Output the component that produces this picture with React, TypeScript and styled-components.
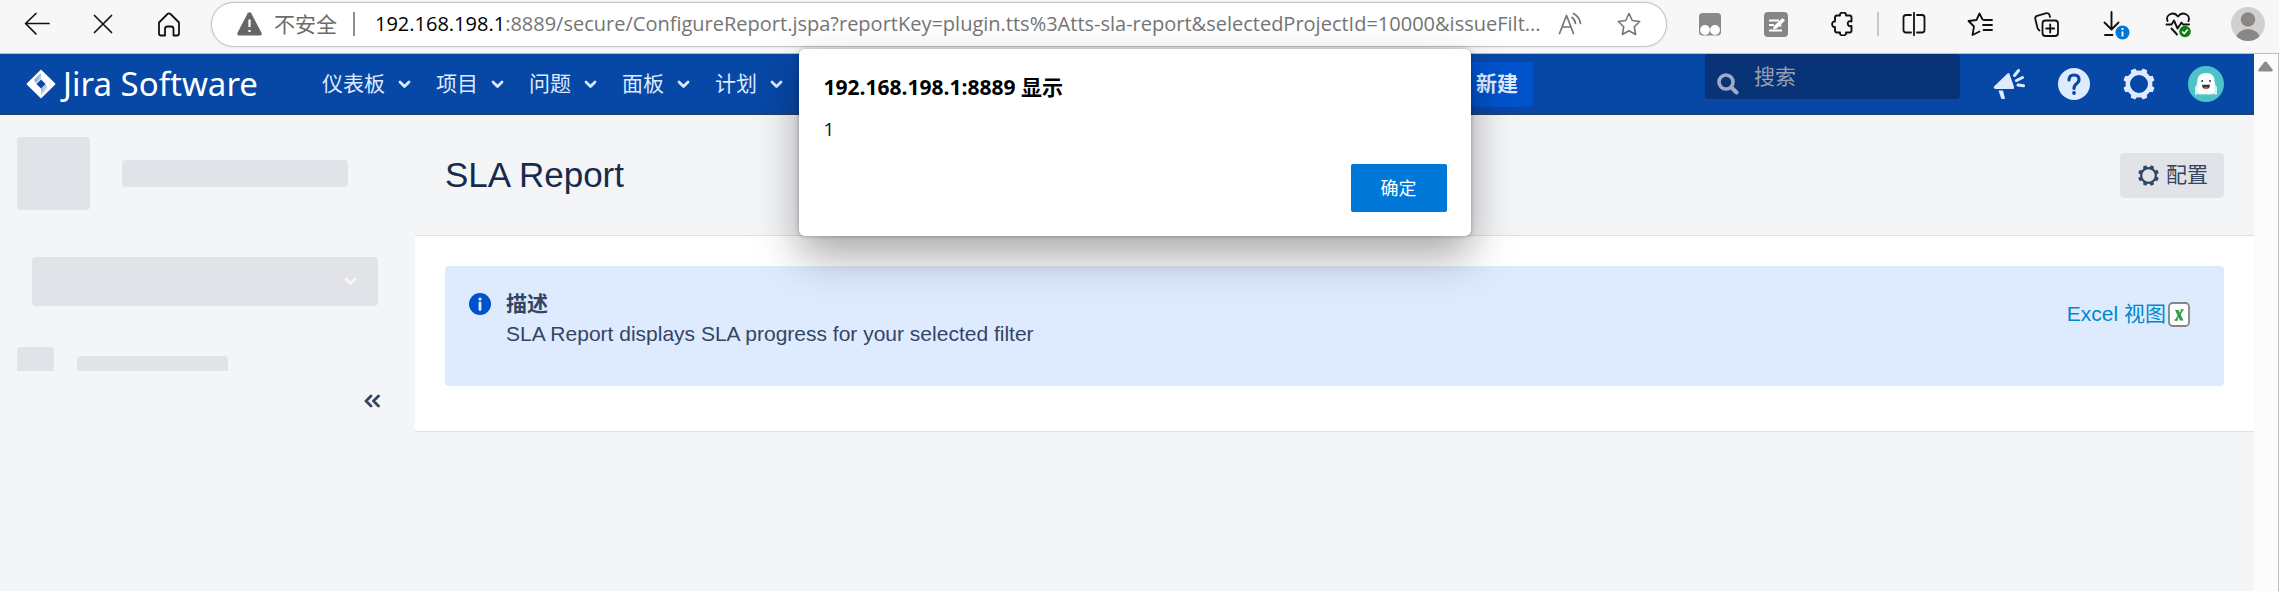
import React from 'react';
import styled, { createGlobalStyle } from 'styled-components';

const ui = `'Open Sans', 'Noto Sans CJK SC', sans-serif`;
const jira = `'Liberation Sans', 'Noto Sans CJK SC', sans-serif`;

const GlobalStyle = createGlobalStyle`
  *, *::before, *::after { box-sizing: border-box; }
  body { margin: 0; background: #f4f5f7; font-family: ${jira}; color: #344563; font-size: 21px; line-height: 30px; }
  button, input { font: inherit; color: inherit; border: 0; margin: 0; }
  button { background: none; padding: 0; cursor: pointer; }
  svg { display: block; flex: none; }
`;

const Window = styled.div`
  position: relative;
  display: flex;
  flex-direction: column;
  min-height: 100vh;
`;

/* Browser chrome */
const Toolbar = styled.div`
  display: flex;
  align-items: center;
  height: 54px;
  padding: 0 2px 5px 4px;
  background: #f7f7f7;
  border-bottom: 1px solid #bdbdbd;
  color: #111;
`;
const ToolButton = styled.button`
  display: flex;
  flex: none;
  align-items: center;
  justify-content: center;
  width: 66px;
  height: 48px;
`;
const ProfileButton = styled(ToolButton)`
  justify-content: flex-end;
  padding-right: 12px;
`;
const AddressBar = styled.div`
  display: flex;
  flex: 1;
  min-width: 0;
  align-items: center;
  height: 45px;
  margin: 0 10px 0 9px;
  padding: 0 24px 0 25px;
  background: #fff;
  border: 1px solid #c4c4c4;
  border-radius: 23px;
  box-shadow: 0 0 2px #d0d0d0;
  font-family: ${ui};
  color: #6b6b6b;
`;
const Security = styled.button`
  display: flex;
  flex: none;
  align-items: center;
  gap: 12px;
  margin-right: 16px;
`;
const Divider = styled.span<{ $tone: string }>`
  flex: none;
  width: 2px;
  height: 24px;
  background: ${(p) => p.$tone};
`;
const Url = styled.div`
  flex: 1;
  min-width: 0;
  margin-left: 20px;
  overflow: hidden;
  white-space: nowrap;
  font-size: 20px;
  color: #757575;
`;
const Host = styled.span`
  color: #000;
`;
const AddressActions = styled.div`
  display: flex;
  flex: none;
  gap: 34px;
  color: #757575;
`;
const ToolDivider = styled(Divider)`
  margin: 0 2px;
`;

/* Page viewport */
const Viewport = styled.div`
  display: flex;
  flex: 1;
`;
const Page = styled.div`
  display: flex;
  flex: 1;
  flex-direction: column;
  min-width: 0;
`;
const Scrollbar = styled.div`
  width: 25px;
  padding: 7px 0 0 4px;
  background: #fcfcfc;
  border-right: 1px solid #bdbdbd;
`;

/* Jira header */
const Header = styled.header`
  display: flex;
  align-items: center;
  height: 61px;
  padding: 0 30px 0 26px;
  background: #0747a6;
  border-bottom: 1px solid #2a3f63;
  color: #deebff;
`;
const Logo = styled.a`
  display: flex;
  align-items: center;
  gap: 7px;
  width: 296px;
  color: #fff;
  font-family: 'Noto Sans', sans-serif;
  font-size: 33px;
  white-space: nowrap;
  text-decoration: none;
`;
const Menu = styled.nav`
  display: flex;
  gap: 25px;
`;
const MenuItem = styled.button`
  display: flex;
  align-items: center;
  gap: 13px;
  white-space: nowrap;
`;
const HeaderTools = styled.div`
  display: flex;
  align-items: center;
  height: 100%;
  margin-left: auto;
`;
const Create = styled.button`
  height: 45px;
  margin-right: 172px;
  padding: 0 15px;
  background: #0052cc;
  border-radius: 4px;
  font-weight: 700;
`;
const Search = styled.label`
  display: flex;
  align-self: flex-start;
  width: 255px;
  height: 45px;
  padding: 0 12px;
  gap: 15px;
  background: #083376;
  border-radius: 4px;
  color: #a0abc2;

  svg { margin-top: 19px; }
`;
const SearchInput = styled.input`
  flex: 1;
  min-width: 0;
  padding: 0;
  background: transparent;
  outline: 0;
  &::placeholder { color: #97a0af; opacity: 1; }
`;
const HeaderIcons = styled.div`
  display: flex;
  align-items: center;
  gap: 33px;
  margin-left: 33px;
`;

/* Body */
const Body = styled.div`
  display: flex;
`;
const Sidebar = styled.aside`
  flex: none;
  width: 415px;
  padding: 22px 35px 0 17px;
`;
const SkeletonRow = styled.div<{ $gap: number; $height: number; $align: string }>`
  display: flex;
  align-items: ${(p) => p.$align};
  gap: ${(p) => p.$gap}px;
  height: ${(p) => p.$height}px;
  overflow: hidden;
`;
const Skeleton = styled.div<{ $width: number; $height: number; $cut?: boolean }>`
  width: ${(p) => p.$width}px;
  height: ${(p) => p.$height}px;
  background: #e2e3e8;
  border-radius: ${(p) => (p.$cut ? '4px 4px 0 0' : '4px')};
`;
const SkeletonSelect = styled.button`
  display: flex;
  align-items: center;
  justify-content: flex-end;
  width: 346px;
  height: 49px;
  margin: 47px 0 41px 15px;
  padding-right: 21px;
  background: #e2e3e8;
  border-radius: 4px;
  color: #f7f8f9;
`;
const Collapse = styled.button`
  display: block;
  margin: 23px 0 0 auto;
`;
const Main = styled.main`
  flex: 1;
  min-width: 0;
`;
const PageHeader = styled.div`
  display: flex;
  align-items: center;
  justify-content: space-between;
  height: 120px;
  padding: 0 30px;
`;
const Title = styled.h1`
  margin: 0;
  color: #172b4d;
  font-size: 35px;
  font-weight: 400;
  line-height: 42px;
`;
const Configure = styled.button`
  display: flex;
  align-items: center;
  gap: 7px;
  height: 45px;
  padding: 0 16px 0 18px;
  background: #e2e3e8;
  border-radius: 4px;
`;
const Panel = styled.section`
  padding: 30px 30px 45px;
  background: #fff;
  border: solid #dcdfe4;
  border-width: 1px 0;
`;
const Message = styled.div`
  display: flex;
  align-items: flex-start;
  min-height: 120px;
  padding: 23px 34px 0 24px;
  gap: 15px;
  background: #deebff;
  border-radius: 4px;

  > svg { margin-top: 4px; }
`;
const MessageText = styled.div`
  flex: 1;
`;
const MessageTitle = styled.strong`
  display: block;
`;
const ExcelLink = styled.a`
  display: flex;
  align-items: center;
  gap: 2px;
  margin-top: 10px;
  color: #0088cc;
  text-decoration: none;
`;

/* Script alert */
const AlertLayer = styled.div`
  position: absolute;
  top: 49px;
  left: 0;
  right: 10px;
  display: flex;
  justify-content: center;
`;
const Alert = styled.div`
  width: 672px;
  padding: 23px 24px 24px 25px;
  background: #fff;
  border-radius: 6px;
  box-shadow: 0 0 4px rgba(0, 0, 0, 0.3), 0 20px 44px rgba(0, 0, 0, 0.34);
  font-family: ${ui};
  font-size: 19px;
  color: #111;
`;
const AlertTitle = styled.h2`
  margin: 0 0 12px;
  font-size: 21px;
  font-weight: 700;
  line-height: 30px;
  color: #000;
`;
const AlertText = styled.p`
  margin: 0 0 20px;
`;
const AlertButton = styled.button`
  display: block;
  width: 96px;
  height: 48px;
  margin-left: auto;
  background: #0078d7;
  border-radius: 2px;
  color: #fff;
  font-size: 18px;
`;

const line = { fill: 'none', stroke: 'currentColor', strokeLinecap: 'round', strokeLinejoin: 'round' } as const;

const Chevron = () => (
  <svg width="13" height="9" viewBox="0 0 13 9" {...line} strokeWidth="2.8"><path d="M2 2l4.5 4.5L11 2" /></svg>
);
const Gear = ({ size, ring }: { size: number; ring: number }) => (
  <svg width={size} height={size} viewBox="0 0 32 32">
    <circle cx="16" cy="16" r="11.200" fill="none" stroke="currentColor" strokeWidth={ring} />
    {[22.5, 67.5, 112.5, 157.5, 202.5, 247.5, 292.5, 337.5].map((a) => (
      <path key={a} d="M12.600 4.500L13.600.2h4.800l1 4.300z" fill="currentColor" transform={`rotate(${a} 16 16)`} />
    ))}
  </svg>
);

export default function App() {
  return (
    <Window>
      <GlobalStyle />
      <Toolbar>
        <ToolButton aria-label="Back">
          <svg width="26" height="24" viewBox="0 0 26 24" {...line} strokeWidth="1.700"><path d="M25 11.500H2M12 1.500L1.500 11.500 12 22" /></svg>
        </ToolButton>
        <ToolButton aria-label="Stop">
          <svg width="20" height="20" viewBox="0 0 20 20" {...line} strokeWidth="1.700"><path d="M1.500 1.500l17 17M18.500 1.500l-17 17" /></svg>
        </ToolButton>
        <ToolButton aria-label="Home">
          <svg width="24" height="25" viewBox="0 0 24 25" {...line} strokeWidth="1.800">
            <path d="M2 10.500L10.500 2q1.500-1.200 3 0l8.500 8.500v11q0 2-2 2h-3.500v-6.500q0-2.500-2.500-2.500h-3.500q-2.500 0-2.500 2.500v6.500H4q-2 0-2-2z" />
          </svg>
        </ToolButton>
        <AddressBar>
          <Security>
            <svg width="25" height="24" viewBox="0 0 25 24">
              <path d="M10.700 1.200q1.800-2 3.600 0L24.600 21q.6 2.500-1.800 2.500H2.200Q-.2 23.500.4 21z" fill="#666" />
              <path d="M12.500 7.500v7.500M12.500 18v2" stroke="#fff" strokeWidth="2.200" />
            </svg>
            不安全
          </Security>
          <Divider $tone="#8e8e8e" />
          <Url>
            <Host>192.168.198.1</Host>:8889/secure/ConfigureReport.jspa?reportKey=plugin.tts%3Atts-sla-report&amp;selectedProjectId=10000&amp;issueFilt...
          </Url>
          <AddressActions>
            <button aria-label="Read aloud">
              <svg width="24" height="24" viewBox="0 0 24 24" {...line} strokeWidth="1.700">
                <path d="M1.500 21.500L8.500 3.500l7 18M4 15h9M14 5.500q3 2 3.500 6M15.500 1.500q6 3.500 7 10" />
              </svg>
            </button>
            <button aria-label="Favourite">
              <svg width="26" height="24" viewBox="0 0 24 24" {...line} strokeWidth="1.600">
                <path d="M12 1.500l3.300 7 7.400 1-5.400 5.300 1.300 7.700L12 18.800l-6.600 3.700 1.300-7.700L1.300 9.500l7.400-1z" />
              </svg>
            </button>
          </AddressActions>
        </AddressBar>
        <ToolButton aria-label="Tampermonkey">
          <svg width="22" height="23" viewBox="0 0 22 23">
            <rect width="22" height="22.500" rx="3.500" fill="#8a8a8a" />
            <circle cx="6" cy="17" r="4.900" fill="#fff" /><circle cx="16" cy="17" r="4.900" fill="#fff" />
          </svg>
        </ToolButton>
        <ToolButton aria-label="Notes">
          <svg width="24" height="25" viewBox="0 0 24 25">
            <rect width="24" height="25" rx="4" fill="#868686" />
            <path d="M5 8.500h10M5 13h5M5 18.500h13M14.500 13.500h3" stroke="#fff" strokeWidth="2.200" />
            <path d="M9 17.500l1-3.500 8.500-8 2.500 2.500-8.500 8z" fill="#fff" />
          </svg>
        </ToolButton>
        <ToolButton aria-label="Extensions">
          <svg width="22" height="24" viewBox="0 0 22 24" {...line} strokeWidth="1.900">
            <path d="M6 3.500H9C8-.5 16-.5 15 3.500h3.500q2 0 2 2v4C15.500 7.500 15.500 15.500 20.500 14v4.500q0 2-2 2H15C16 24.300 8 24.300 9 20.500H6q-2 0-2-2V15C.2 16 .2 8.500 4 9.500v-4q0-2 2-2z" />
          </svg>
        </ToolButton>
        <ToolDivider $tone="#c8c8c8" />
        <ToolButton aria-label="Split screen">
          <svg width="24" height="24" viewBox="0 0 24 24" {...line} strokeWidth="1.800">
            <path d="M9 3H4Q1.500 3 1.500 5.500v12.500q0 2.500 2.500 2.500h5M15 3h5q2.500 0 2.500 2.500v12.500q0 2.500-2.500 2.500h-5M12 .8v22.400" />
          </svg>
        </ToolButton>
        <ToolButton aria-label="Favourites">
          <svg width="26" height="24" viewBox="0 0 26 24" {...line} strokeWidth="1.800">
            <path d="M17.500 8l-2-.5L12.500 1.500 9.500 8 1.500 9l5.500 5.500L5.500 23l7-3.500M17 8h8M16 13h9M16.500 18h8.500" />
          </svg>
        </ToolButton>
        <ToolButton aria-label="Collections">
          <svg width="25" height="25" viewBox="0 0 25 25" {...line} strokeWidth="1.800">
            <rect x="8.500" y="8.500" width="15.500" height="15.500" rx="3" />
            <path d="M16.200 12.500v8M12.200 16.500h8M5.500 18.500Q4 17.500 3.500 16L1.200 6.500Q1 4.500 3 3.800L12.500 1.200q2.200-.2 3 1.800l.5 2" />
          </svg>
        </ToolButton>
        <ToolButton aria-label="Downloads">
          <svg width="38" height="32" viewBox="-8 -2 38 32">
            <path d="M10.500 2v17M3.500 12.500l7 7 7-7M4 25h7.500" {...line} strokeWidth="1.900" />
            <circle cx="21.500" cy="22.500" r="7" fill="#0078d7" />
            <path d="M21.500 21.500v5M21.500 18v2" stroke="#fff" strokeWidth="1.800" />
          </svg>
        </ToolButton>
        <ToolButton aria-label="Browser essentials">
          <svg width="26" height="28" viewBox="0 -2 26 28">
            <path d="M2.500 9C0 3 8.500-1.500 13 4.500 17.500-1.500 26 3 23.500 9M1.500 12.500h5l2.500-4 3.500 8 4-6 1.500 2h6M6.500 16.500l5.500 6" {...line} strokeWidth="1.900" />
            <circle cx="20" cy="19.500" r="5.800" fill="#0f7b10" />
            <path d="M17.200 19.500l2 2 3.600-4" fill="none" stroke="#fff" strokeWidth="1.600" />
          </svg>
        </ToolButton>
        <ProfileButton aria-label="Profile">
          <svg width="34" height="34" viewBox="0 0 34 34">
            <clipPath id="profile"><circle cx="17" cy="17" r="17" /></clipPath>
            <g clipPath="url(#profile)">
              <rect width="34" height="34" fill="#d2d0ce" />
              <circle cx="17" cy="12.500" r="7.200" fill="#8a8886" />
              <ellipse cx="17" cy="32" rx="12" ry="10" fill="#8a8886" />
            </g>
          </svg>
        </ProfileButton>
      </Toolbar>

      <Viewport>
        <Page>
          <Header>
            <Logo href="#">
              <svg width="30" height="30" viewBox="0 0 30 30">
                <defs>
                  <linearGradient id="fade" x1="0" y1="0" x2="1" y2="1">
                    <stop offset="0.200" stopColor="#5f8bcb" /><stop offset="1" stopColor="#fff" />
                  </linearGradient>
                  <linearGradient id="fade-back" x1="1" y1="1" x2="0" y2="0">
                    <stop offset="0.200" stopColor="#fff" /><stop offset="1" stopColor="#5f8bcb" />
                  </linearGradient>
                </defs>
                <path fillRule="evenodd" d="M15 .5l14 13.700q.8.800 0 1.600L15 29.500 1 15.800q-.8-.8 0-1.600zM15 10.400L10.400 15l4.600 4.600 4.600-4.600z" fill="#fff" />
                <path d="M15 4v6.400l-4.600 4.600L8 11z" fill="url(#fade)" />
                <path d="M15 26v-6.400l4.600-4.600L22 19z" fill="url(#fade-back)" />
              </svg>
              Jira Software
            </Logo>
            <Menu>
              {['仪表板', '项目', '问题', '面板', '计划'].map((name) => (
                <MenuItem key={name}>{name}<Chevron /></MenuItem>
              ))}
            </Menu>
            <HeaderTools>
              <Create>新建</Create>
              <Search>
                <svg width="22" height="22" viewBox="0 0 22 22" {...line}>
                  <circle cx="9" cy="9" r="7" strokeWidth="3.600" /><path d="M15 15l4.500 4.500" strokeWidth="4" />
                </svg>
                <SearchInput type="search" placeholder="搜索" aria-label="搜索" />
              </Search>
              <HeaderIcons>
                <button aria-label="Feedback">
                  <svg width="32" height="32" viewBox="0 0 32 32">
                    <path d="M1 18.500q-1 1.800 1.200 2.500L20 21q1.500-.2 1-2L16.500 6q-.8-1.500-2-.5zM5.500 22.500h4.500l2 8q-1.800 1-3.800 0z" fill="currentColor" />
                    <path d="M21.500 7.500L25.500 2.500M23.500 12.500l6-3M25 17l5.500.8" {...line} strokeWidth="3" />
                  </svg>
                </button>
                <button aria-label="Help">
                  <svg width="32" height="32" viewBox="0 0 32 32">
                    <circle cx="16" cy="16" r="16" fill="currentColor" />
                    <path d="M11 12q0-5 5-5t5 4.500q0 2.500-2.500 4.200Q16 17.500 16 20.500" fill="none" stroke="#0747a6" strokeWidth="3.200" strokeLinecap="round" />
                    <circle cx="16" cy="25" r="1.900" fill="#0747a6" />
                  </svg>
                </button>
                <button aria-label="Administration"><Gear size={32} ring={4.4} /></button>
                <button aria-label="Account">
                  <svg width="36" height="36" viewBox="0 0 36 36">
                    <circle cx="18" cy="18" r="18" fill="#4bc3c8" />
                    <path d="M7 28.500V21q2-2 2.500-6h17q.5 4 2.500 6v7.500q-2 1-3.500-.8-2 1.800-3.800.3-1.800 1.600-3.700 0-1.900 1.600-3.700 0-2 1.500-3.800-.3-1.500 1.800-3.500.8z" fill="#d5f0f1" />
                    <path d="M9.500 25V15q0-8 8.500-8t8.500 8v10q0 3-3.500 2.500-2.500 1.500-5 0-2.500 1.500-5 0-3.500.5-3.500-2.500z" fill="#fff" />
                    <circle cx="14.200" cy="15" r="1" fill="#253858" /><circle cx="22" cy="15" r="1" fill="#253858" />
                    <path d="M14 18.800h8q0 4.200-4 4.200t-4-4.200z" fill="#253858" />
                    <path d="M15.500 22q2.500-2 5 0-2.500 2-5 0z" fill="#ff5630" />
                  </svg>
                </button>
              </HeaderIcons>
            </HeaderTools>
          </Header>

          <Body>
            <Sidebar>
              <SkeletonRow $gap={32} $height={73} $align="center">
                <Skeleton $width={73} $height={73} />
                <Skeleton $width={226} $height={27} />
              </SkeletonRow>
              <SkeletonSelect aria-label="Switch project"><Chevron /></SkeletonSelect>
              <SkeletonRow $gap={23} $height={24} $align="flex-end">
                <Skeleton $width={37} $height={24} $cut />
                <Skeleton $width={151} $height={15} $cut />
              </SkeletonRow>
              <Collapse aria-label="Collapse sidebar">
                <svg width="16" height="14" viewBox="0 0 16 14" {...line} strokeWidth="2.800"><path d="M7 2L2 7l5 5M14.500 2l-5 5 5 5" /></svg>
              </Collapse>
            </Sidebar>
            <Main>
              <PageHeader>
                <Title>SLA Report</Title>
                <Configure><Gear size={21} ring={3.4} />配置</Configure>
              </PageHeader>
              <Panel>
                <Message>
                  <svg width="22" height="22" viewBox="0 0 22 22">
                    <circle cx="11" cy="11" r="11" fill="#0052cc" />
                    <path d="M11 10v6.500" stroke="#deebff" strokeWidth="2.800" strokeLinecap="round" />
                    <circle cx="11" cy="6" r="1.600" fill="#deebff" />
                  </svg>
                  <MessageText>
                    <MessageTitle>描述</MessageTitle>
                    SLA Report displays SLA progress for your selected filter
                  </MessageText>
                  <ExcelLink href="#">
                    Excel 视图
                    <svg width="22" height="25" viewBox="0 0 22 25">
                      <rect x="1" y="1" width="20" height="23" rx="3.500" fill="#fff" stroke="#858585" strokeWidth="1.800" />
                      <path d="M7 8h3.500l5 10.500h-3.500z" fill="#2e9e44" />
                      <path d="M14 8.500L8 18M12.500 8h3M6.500 18h3.500" stroke="#2e9e44" strokeWidth="1.600" />
                    </svg>
                  </ExcelLink>
                </Message>
              </Panel>
            </Main>
          </Body>
        </Page>
        <Scrollbar>
          <svg width="15" height="11" viewBox="0 0 15 11"><path d="M6.300 1q1.200-1.200 2.400 0L14.500 8.500q.8 2-1 2h-12q-1.800 0-1-2z" fill="#8b8b8b" /></svg>
        </Scrollbar>
      </Viewport>

      <AlertLayer>
        <Alert role="alertdialog" aria-labelledby="alert-title">
          <AlertTitle id="alert-title">192.168.198.1:8889 显示</AlertTitle>
          <AlertText>1</AlertText>
          <AlertButton>确定</AlertButton>
        </Alert>
      </AlertLayer>
    </Window>
  );
}
